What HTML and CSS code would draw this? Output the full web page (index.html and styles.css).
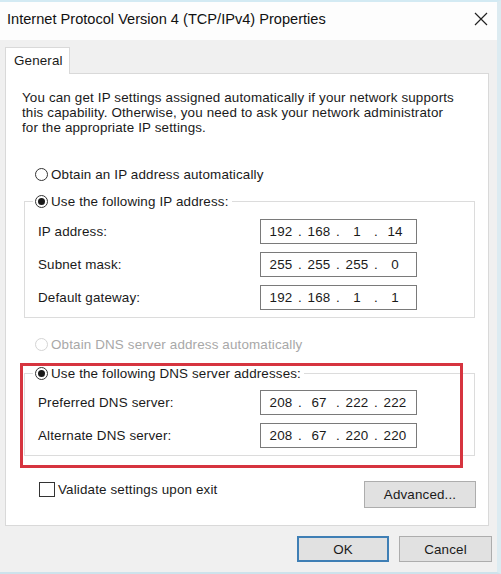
FILE: index.html
```html
<!DOCTYPE html>
<html>
<head>
<meta charset="utf-8">
<link rel="stylesheet" href="styles.css">
</head>
<body>
<div class="window">
  <div class="titlebar">
    <span class="title">Internet Protocol Version 4 (TCP/IPv4) Properties</span>
    <svg class="close" width="14" height="14" viewBox="0 0 14 14"><path d="M1 1 L13 13 M13 1 L1 13" stroke="#222" stroke-width="1.2" fill="none"/></svg>
  </div>
  <div class="content">
    <div class="tabs"><div class="tab">General</div></div>
    <div class="panel">
      <p class="intro">You can get IP settings assigned automatically if your network supports<br>this capability. Otherwise, you need to ask your network administrator<br>for the appropriate IP settings.</p>
      <div class="option first"><span class="radio"></span><span>Obtain an IP address automatically</span></div>
      <fieldset class="group">
        <legend><span class="option"><span class="radio checked"></span><span>Use the following IP address:</span></span></legend>
        <div class="row"><span>IP address:</span><div class="ip"><span class="seg">192</span><span class="dot">.</span><span class="seg">168</span><span class="dot">.</span><span class="seg">1</span><span class="dot">.</span><span class="seg">14</span></div></div>
        <div class="row"><span>Subnet mask:</span><div class="ip"><span class="seg">255</span><span class="dot">.</span><span class="seg">255</span><span class="dot">.</span><span class="seg">255</span><span class="dot">.</span><span class="seg">0</span></div></div>
        <div class="row"><span>Default gateway:</span><div class="ip"><span class="seg">192</span><span class="dot">.</span><span class="seg">168</span><span class="dot">.</span><span class="seg">1</span><span class="dot">.</span><span class="seg">1</span></div></div>
      </fieldset>
      <div class="option second disabled"><span class="radio"></span><span>Obtain DNS server address automatically</span></div>
      <fieldset class="group dns">
        <legend><span class="option"><span class="radio checked"></span><span>Use the following DNS server addresses:</span></span></legend>
        <div class="row"><span>Preferred DNS server:</span><div class="ip"><span class="seg">208</span><span class="dot">.</span><span class="seg">67</span><span class="dot">.</span><span class="seg">222</span><span class="dot">.</span><span class="seg">222</span></div></div>
        <div class="row"><span>Alternate DNS server:</span><div class="ip"><span class="seg">208</span><span class="dot">.</span><span class="seg">67</span><span class="dot">.</span><span class="seg">220</span><span class="dot">.</span><span class="seg">220</span></div></div>
      </fieldset>
      <div class="bottom">
        <div class="check-option"><span class="checkbox"></span><span>Validate settings upon exit</span></div>
        <button class="btn advanced">Advanced...</button>
      </div>
    </div>
    <div class="actions">
      <button class="btn ok">OK</button>
      <button class="btn cancel">Cancel</button>
    </div>
  </div>
  <div class="highlight"></div>
</div>
</body>
</html>
```
FILE: styles.css
```css
* { box-sizing: border-box; }
html, body { margin: 0; padding: 0; }
body {
  width: 501px;
  height: 574px;
  overflow: hidden;
  font-family: "Liberation Sans", Arial, sans-serif;
  font-size: 13.4px;
  letter-spacing: 0.15px;
  color: #1a1a1a;
  background: #f0f0f0;
}
.window {
  position: relative;
  width: 501px;
  height: 574px;
  background: #f0f0f0;
  border-top: 2px solid #d3eaf3;
  border-right: 4px solid #dcebf1;
  border-bottom: 2px solid #cde3ec;
}
.titlebar {
  height: 38px;
  background: #fdfdfd;
  display: flex;
  align-items: center;
  justify-content: space-between;
  padding: 0 9px 4px 7px;
}
.title { font-size: 14.6px; letter-spacing: 0; color: #111; }
.close { display: block; }
.content { padding: 0 0 0 5px; }
.tabs { display: flex; padding-top: 7px; }
.tab {
  width: 65px;
  height: 27px;
  background: #fff;
  border: 1px solid #d9d9d9;
  border-bottom: none;
  padding: 5px 0 0 8px;
  margin-bottom: -1px;
  position: relative;
  z-index: 1;
}
.panel {
  width: 484px;
  height: 453px;
  background: #fff;
  border: 1px solid #d9d9d9;
  padding: 16px 13px 0 16px;
}
.intro {
  margin: 0;
  line-height: 15px;
}
.option {
  display: flex;
  align-items: center;
  height: 20px;
  gap: 3px;
}
.option.first { margin: 29px 0 0 13px; }
.option.second { margin: 16px 0 0 13px; }
.option.disabled { color: #a8a8a8; }
.radio {
  width: 13px;
  height: 13px;
  border: 1px solid #333;
  border-radius: 50%;
  display: flex;
  align-items: center;
  justify-content: center;
  background: #fff;
  flex: none;
}
.option.disabled .radio { border-color: #d4d4d4; }
.radio.checked::after {
  content: "";
  width: 7px;
  height: 7px;
  border-radius: 50%;
  background: #1a1a1a;
}
.group {
  margin: 7px 0 0 2px;
  padding: 8px 13px 7px 13px;
  border: 1px solid #dcdcdc;
  min-width: 0;
}
.group.dns { margin-top: 9px; padding-top: 7px; }
.group legend {
  padding: 0 3px 0 2px;
  margin-left: -5px;
}
.row {
  display: grid;
  grid-template-columns: 222px 157px;
  align-items: center;
  height: 25px;
}
.row + .row { margin-top: 8px; }
.ip {
  height: 25px;
  border: 1px solid #7a7a7a;
  display: flex;
  align-items: center;
  padding-left: 5px;
}
.seg { width: 30px; text-align: center; }
.dot { width: 8px; text-align: center; }
.bottom {
  display: flex;
  justify-content: space-between;
  align-items: flex-start;
  margin-top: 25px;
}
.check-option {
  display: flex;
  align-items: center;
  gap: 3px;
  margin: 1px 0 0 17px;
  height: 15px;
}
.checkbox {
  width: 16px;
  height: 15px;
  border: 1px solid #333;
  background: #fff;
  flex: none;
}
.btn {
  font-family: inherit;
  font-size: 13.4px;
  letter-spacing: 0.15px;
  color: #1a1a1a;
  background: #e1e1e1;
  border: 1px solid #adadad;
  height: 27px;
  padding: 0;
}
.advanced { width: 112px; margin-right: -1px; }
.actions {
  display: flex;
  justify-content: flex-end;
  gap: 10px;
  padding-top: 10px;
  width: 487px;
}
.ok, .cancel { height: 26px; }
.ok { width: 92px; border: 2px solid #3f7fb5; }
.cancel { width: 93px; }
.highlight {
  position: absolute;
  left: 20px;
  top: 361px;
  width: 443px;
  height: 105px;
  border: 3px solid #d6343f;
  pointer-events: none;
}
```
